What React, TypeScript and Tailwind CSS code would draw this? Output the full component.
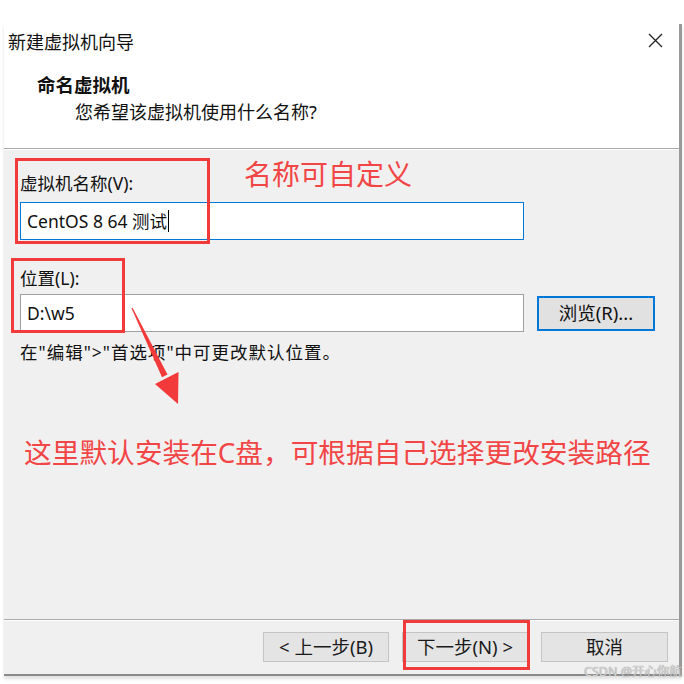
import React from "react";

function Btn({ children, className = "" }: { children: React.ReactNode; className?: string }) {
  return (
    <div
      className={`flex h-[30px] w-[126px] items-center justify-center border border-[#c4c4c4] bg-[#e4e4e4] text-[18.5px] text-[#1a1a1a] ${className}`}
    >
      {children}
    </div>
  );
}

export default function App() {
  return (
    <div className="relative h-[684px] w-[684px] overflow-hidden bg-white font-['Noto_Sans','Noto_Sans_CJK_SC',sans-serif] text-[#111]">
      <div className="pl-[4px] pt-[24px]">
        <div className="flex h-[652px] w-[678px] flex-col border-b-[2px] border-r-[3px] border-b-[#8a8a8a] border-r-[#9a9a9a] shadow-[0_3px_3px_rgba(0,0,0,0.12)]">
          {/* header */}
          <div className="relative h-[124px] bg-white">
            <div className="pl-[4px] pt-[6px] text-[18px] leading-[24px]">新建虚拟机向导</div>
            <svg className="absolute left-[644px] top-[9px]" width="15" height="15" viewBox="0 0 15 15">
              <path d="M1 1 L14 14 M14 1 L1 14" stroke="#222" strokeWidth="1.3" fill="none" />
            </svg>
            <div className="mt-[19px] pl-[33px] text-[18.5px] font-bold leading-[24px]">命名虚拟机</div>
            <div className="mt-[3px] pl-[71px] text-[18px] leading-[24px]">您希望该虚拟机使用什么名称?</div>
          </div>
          <div className="h-[2px] border-t border-[#a9a9a9] bg-white" />
          {/* content */}
          <div className="flex h-[469px] flex-col bg-[#f0f0f0] pl-[16px] pt-[21px] text-[17.5px]">
            <div className="leading-[24px]">虚拟机名称(V):</div>
            <div className="mt-[7px] flex h-[38px] w-[504px] items-center border border-[#0078d7] bg-white pl-[6px] leading-[24px]">
              CentOS 8 64 测试<span className="ml-[1px] inline-block h-[22px] w-[1px] bg-black" />
            </div>
            <div className="mt-[26px] leading-[24px]">位置(L):</div>
            <div className="mt-[4px] flex items-center gap-[13px]">
              <div className="flex h-[38px] w-[504px] items-center border border-[#a0a0a0] bg-white pl-[6px] leading-[24px]">
                D:\w5
              </div>
              <div className="flex h-[35px] w-[118px] items-center justify-center border-2 border-[#0078d7] bg-[#e1e1e1] text-[18.5px]">
                浏览(R)...
              </div>
            </div>
            <div className="mt-[8px] text-[17.5px] leading-[24px] tracking-[1px]">在"编辑"&gt;"首选项"中可更改默认位置。</div>
          </div>
          <div className="h-[2px] border-t border-[#a9a9a9] bg-white" />
          {/* footer */}
          <div className="flex flex-1 items-start justify-end gap-[13px] bg-[#f0f0f0] pr-[11px] pt-[11px]">
            <Btn>&lt; 上一步(B)</Btn>
            <Btn className="w-[125px]">下一步(N) &gt;</Btn>
            <Btn className="w-[127px]">取消</Btn>
          </div>
        </div>
      </div>

      {/* annotations */}
      <div className="absolute left-[15px] top-[158px] h-[86px] w-[195px] border-[3px] border-[#f23a3a]" />
      <div className="absolute left-[11px] top-[258px] h-[75px] w-[114px] border-[3px] border-[#f23a3a]" />
      <div className="absolute left-[403px] top-[620px] h-[50px] w-[127px] border-[3px] border-[#f23a3a]" />
      <div className="absolute left-[244px] top-[157px] text-[28px] leading-[34px] text-[#f24545]">名称可自定义</div>
      <div className="absolute left-[24px] top-[435px] text-[27.7px] leading-[34px] text-[#f24545]">
        这里默认安装在C盘，可根据自己选择更改安装路径
      </div>
      <svg className="absolute left-0 top-0" width="684" height="684" viewBox="0 0 684 684" style={{ pointerEvents: "none" }}>
        <polygon points="131.5,308.3 132.6,307.7 167.5,374.5 162,377.2" fill="#f23a3a" />
        <polygon points="178.5,372 155,384 178,404" fill="#f23a3a" />
      </svg>
      <div className="absolute right-[2px] top-[664px] text-[12.5px] leading-[16px] text-[#d0d0d0] [text-shadow:0_0_1px_#888]">
        CSDN @开心你航
      </div>
    </div>
  );
}
